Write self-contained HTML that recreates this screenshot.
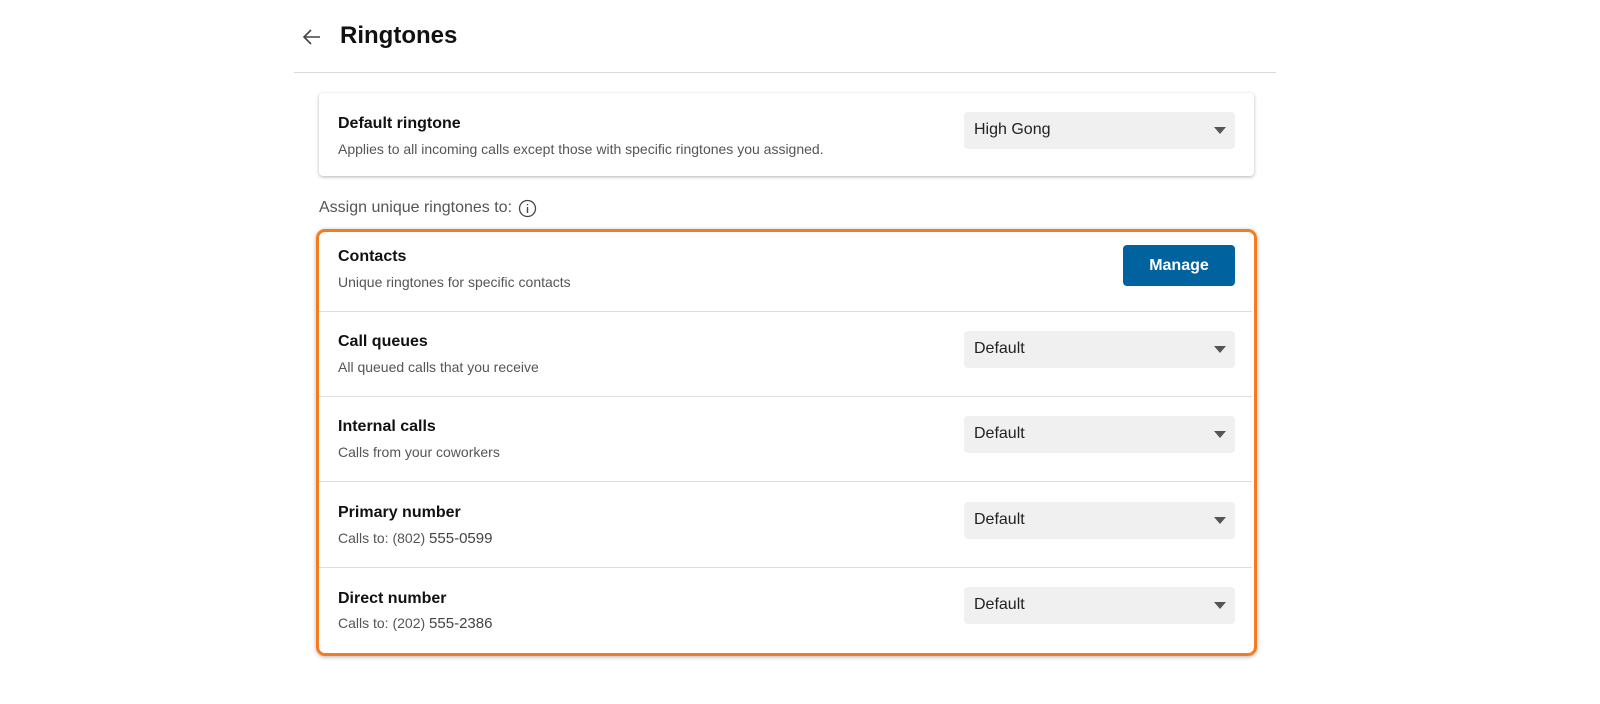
<!DOCTYPE html>
<html><head><style>
*{box-sizing:border-box;margin:0;padding:0}
body{width:1600px;height:704px;background:#fff;font-family:"Liberation Sans",sans-serif;color:#1a1a1a;position:relative;overflow:hidden}
.abs{position:absolute}
.title{left:340px;top:22px;font-size:24px;font-weight:bold;color:#111}
.hr{left:294px;top:72px;width:982px;height:1px;background:#d9d9d9}
.card{left:319px;top:93px;width:935px;height:83px;background:#fff;border-radius:4px;box-shadow:0 1px 3px rgba(0,0,0,.3)}
.h{font-size:16px;font-weight:bold;color:#111}
.s{font-size:14px;color:#555}
.sel{width:271px;height:37px;background:#f0f0f0;border-radius:4px;font-size:16px;color:#222;padding:9px 0 0 10px}
.sel:after{content:"";position:absolute;right:9px;top:15px;border-left:6px solid transparent;border-right:6px solid transparent;border-top:7px solid #555}
.box{left:316px;top:229px;width:941px;height:427px;border:3px solid #f47b20;border-radius:9px;box-shadow:0 1px 4px rgba(0,0,0,.3)}
.line{left:319px;width:933px;height:1px;background:#ddd}
.btn{left:1123px;top:245px;width:112px;height:41px;background:#0063a0;color:#fff;border-radius:4px;font-size:16px;font-weight:bold;text-align:center;line-height:41px}
</style></head><body>
<svg class="abs" style="left:302px;top:28px" width="20" height="18" viewBox="0 0 20 18"><path d="M18 9H2M9 2L2 9l7 7" fill="none" stroke="#444" stroke-width="1.6"/></svg>
<div class="abs title">Ringtones</div>
<div class="abs hr"></div>
<div class="abs card"></div>
<div class="abs h" style="left:338px;top:115px">Default ringtone</div>
<div class="abs s" style="left:338px;top:141px">Applies to all incoming calls except those with specific ringtones you assigned.</div>
<div class="abs sel" style="left:964px;top:112px">High Gong</div>
<div class="abs" style="left:319px;top:199px;font-size:16px;color:#555">Assign unique ringtones to:</div>
<svg class="abs" style="left:518px;top:199px" width="19" height="19" viewBox="0 0 19 19"><circle cx="9.5" cy="9.5" r="8" fill="none" stroke="#444" stroke-width="1.3"/><path d="M9.5 8v6M9.5 5v1.3" stroke="#444" stroke-width="1.4"/></svg>
<div class="abs box"></div>
<div class="abs h" style="left:338px;top:248px">Contacts</div>
<div class="abs s" style="left:338px;top:274px">Unique ringtones for specific contacts</div>
<div class="abs btn">Manage</div>
<div class="abs line" style="top:311px"></div>
<div class="abs h" style="left:338px;top:333px">Call queues</div>
<div class="abs s" style="left:338px;top:359px">All queued calls that you receive</div>
<div class="abs sel" style="left:964px;top:331px">Default</div>
<div class="abs line" style="top:396px"></div>
<div class="abs h" style="left:338px;top:418px">Internal calls</div>
<div class="abs s" style="left:338px;top:444px">Calls from your coworkers</div>
<div class="abs sel" style="left:964px;top:416px">Default</div>
<div class="abs line" style="top:481px"></div>
<div class="abs h" style="left:338px;top:504px">Primary number</div>
<div class="abs s" style="left:338px;top:530px">Calls to: (802) <span style="color:#444;font-size:15px">555-0599</span></div>
<div class="abs sel" style="left:964px;top:502px">Default</div>
<div class="abs line" style="top:567px"></div>
<div class="abs h" style="left:338px;top:590px">Direct number</div>
<div class="abs s" style="left:338px;top:615px">Calls to: (202) <span style="color:#444;font-size:15px">555-2386</span></div>
<div class="abs sel" style="left:964px;top:587px">Default</div>
</body></html>
